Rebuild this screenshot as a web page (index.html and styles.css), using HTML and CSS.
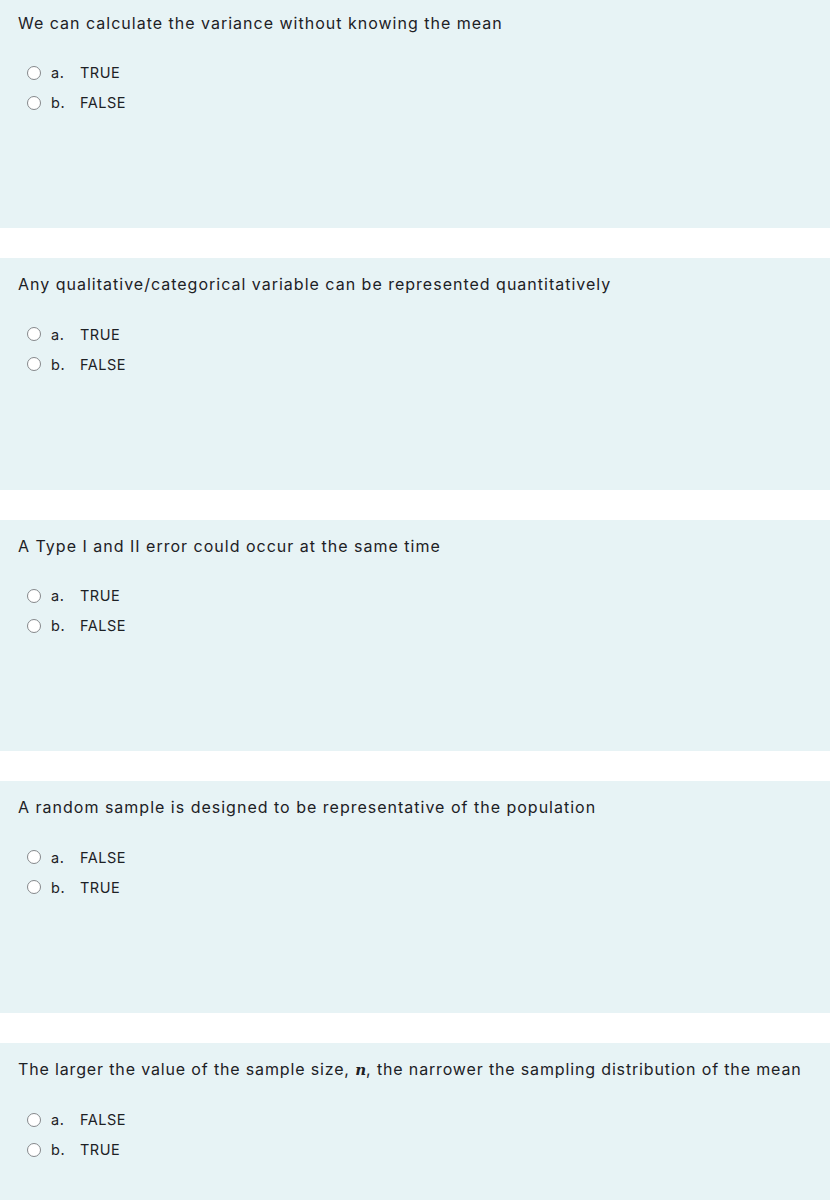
FILE: index.html
```html
<!DOCTYPE html>
<html>
<head>
<meta charset="utf-8">
<link rel="stylesheet" href="styles.css">
</head>
<body>
<div class="que">
  <div class="qtext">We can calculate the variance without knowing the mean</div>
  <div class="answers">
    <label class="opt"><span class="radio"></span><span class="letter">a.</span><span class="val">TRUE</span></label>
    <label class="opt"><span class="radio"></span><span class="letter">b.</span><span class="val">FALSE</span></label>
  </div>
</div>
<div class="que">
  <div class="qtext">Any qualitative/categorical variable can be represented quantitatively</div>
  <div class="answers">
    <label class="opt"><span class="radio"></span><span class="letter">a.</span><span class="val">TRUE</span></label>
    <label class="opt"><span class="radio"></span><span class="letter">b.</span><span class="val">FALSE</span></label>
  </div>
</div>
<div class="que">
  <div class="qtext">A Type I and II error could occur at the same time</div>
  <div class="answers">
    <label class="opt"><span class="radio"></span><span class="letter">a.</span><span class="val">TRUE</span></label>
    <label class="opt"><span class="radio"></span><span class="letter">b.</span><span class="val">FALSE</span></label>
  </div>
</div>
<div class="que">
  <div class="qtext">A random sample is designed to be representative of the population</div>
  <div class="answers">
    <label class="opt"><span class="radio"></span><span class="letter">a.</span><span class="val">FALSE</span></label>
    <label class="opt"><span class="radio"></span><span class="letter">b.</span><span class="val">TRUE</span></label>
  </div>
</div>
<div class="que">
  <div class="qtext wide">The larger the value of the sample size, <span class="math">n</span>, the narrower the sampling distribution of the mean</div>
  <div class="answers">
    <label class="opt"><span class="radio"></span><span class="letter">a.</span><span class="val">FALSE</span></label>
    <label class="opt"><span class="radio"></span><span class="letter">b.</span><span class="val">TRUE</span></label>
  </div>
</div>
</body>
</html>
```
FILE: styles.css
```css
html, body {
  margin: 0;
  padding: 0;
  background: #ffffff;
}
body {
  font-family: Inter, "Open Sans", sans-serif;
  color: #1d2125;
}
.que {
  background: #e7f3f5;
  height: 231.5px;
  margin-bottom: 30px;
  box-sizing: border-box;
  padding: 16px 18px 0 18px;
}
.que:first-child {
  margin-top: -3.5px;
}
.que:last-child {
  margin-bottom: 0;
}
.qtext {
  font-size: 16px;
  line-height: 20px;
  letter-spacing: 1px;
  white-space: nowrap;
}
.qtext.wide {
  letter-spacing: 0.85px;
}
.math {
  font-family: "DejaVu Serif", "Liberation Serif", serif;
  font-style: italic;
  font-weight: bold;
  font-size: 15px;
  letter-spacing: 0;
}
.answers {
  margin-top: 25px;
  display: flex;
  flex-direction: column;
}
.opt {
  display: flex;
  align-items: center;
  height: 30px;
  font-size: 14.5px;
}
.radio {
  width: 12px;
  height: 12px;
  border: 1px solid #85888b;
  border-radius: 50%;
  background: #ffffff;
  margin-left: 9px;
  margin-right: 10px;
  flex: none;
}
.letter {
  width: 29px;
  letter-spacing: 0.5px;
}
.val {
  letter-spacing: 0.5px;
}
```
